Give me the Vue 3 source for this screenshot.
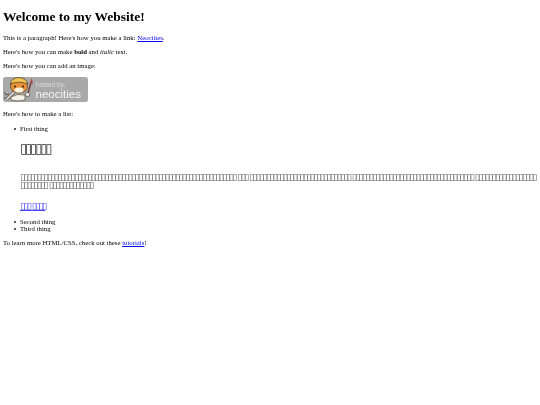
<script setup>
const box = (n) => '▯'.repeat(n)
const heading = box(6)
const para = [box(64), box(3), box(30), box(36), box(18), box(8), box(13)].join(' ')
const link = box(3) + ' ' + box(4)
</script>
<template>
  <div class="page">
    <h1>Welcome to my Website!</h1>
    <p>This is a paragraph! Here's how you make a link: <a href="#">Neocities</a>.</p>
    <p>Here's how you can make <strong>bold</strong> and <em>italic</em> text.</p>
    <p>Here's how you can add an image:</p>
    <p class="badge-row"><svg class="badge" width="85" height="25" viewBox="0 0 85 25">
      <rect width="85" height="25" rx="2.5" fill="#a9a9a9" />
      <path d="M4 22 L11 15" stroke="#4a3a2a" stroke-width="2.6" fill="none" />
      <path d="M4 22 L11 15" stroke="#f2f2f2" stroke-width="1.6" fill="none" />
      <path d="M1.5 15 L3 18 L6 17 M3 20 L1.5 22" stroke="#4a3a2a" stroke-width="0.8" fill="none" />
      <path d="M25 16 L28.2 5" stroke="#6b3b32" stroke-width="1.4" />
      <path d="M27 6 L28.8 1 L30 6.5 Z" fill="#a8483a" />
      <path d="M8 20 Q14 16 22 18 L22 23 Q15 25 8 23 Z" fill="#f4f0e6" stroke="#4a3420" stroke-width="0.6" />
      <ellipse cx="16" cy="9.5" rx="8.5" ry="6.5" fill="#e8923a" stroke="#4a3420" stroke-width="0.7" />
      <path d="M7 7 Q9 0.5 16 0.5 Q23 1 25 7 Q16 3.5 7 7 Z" fill="#f1c550" stroke="#4a3420" stroke-width="0.7" />
      <ellipse cx="16" cy="13" rx="4.5" ry="2.6" fill="#fbf1dc" />
      <circle cx="12" cy="9.5" r="1" fill="#2b1d12" />
      <circle cx="20" cy="9.5" r="1" fill="#2b1d12" />
      <circle cx="24.5" cy="17.5" r="2.1" fill="#f5f5f5" stroke="#4a3420" stroke-width="0.6" />
      <text x="33" y="10" font-size="6.4" fill="#dcdcdc" font-family="Liberation Sans, sans-serif">hosted by,</text>
      <text x="32.5" y="20.5" font-size="11.5" fill="#f5f5f5" font-family="Liberation Sans, sans-serif">neocities</text>
    </svg></p>
    <p class="list-intro">Here's how to make a list:</p>
    <ul>
      <li><div>First thing</div>
        <h2 class="tofu">{{ heading }}</h2>
        <p class="tofu para">{{ para }}</p>
        <p class="tofu linkrow"><a href="#">{{ link }}</a></p>
      </li>
      <li>Second thing</li>
      <li>Third thing</li>
    </ul>
    <p>To learn more HTML/CSS, check out these <a href="#">tutorials</a>!</p>
  </div>
</template>
<style scoped>
.page { font-family: "Liberation Serif", serif; font-size: 6.75px; color: #000; padding: 0 3px; overflow: hidden; filter: blur(0.15px); }
h1 { font-size: 13.5px; margin: 9px 0; font-weight: bold; }
p { margin: 6.75px 0; }
.badge-row { margin-top: 8.75px; margin-bottom: 5.75px; }
ul { margin: 7.75px 0 6.75px; padding-left: 17px; list-style: none; }
li { position: relative; }
li::before { content: ""; position: absolute; left: -6px; top: 3px; width: 2px; height: 2px; border-radius: 50%; background: #222; }
h2 { font-size: 13.5px; line-height: 11.6px; margin: 11.4px 0 19px; font-weight: normal; color: #333; }
a { color: #0000ee; }
.badge { display: inline-block; }
.tofu { font-family: "DejaVu Sans", sans-serif; letter-spacing: -0.176em; word-spacing: 0.045em; }
.para, .linkrow { font-size: 9px; line-height: 7.76px; }
.para { color: #666; }
.linkrow a { color: #4a4af0; }
.linkrow { margin-top: 14px; margin-bottom: 7px; }
</style>
<style>
body { margin: 0; background: #fff; }
</style>
